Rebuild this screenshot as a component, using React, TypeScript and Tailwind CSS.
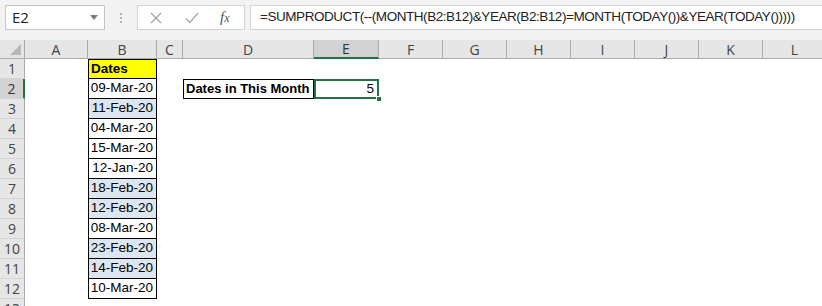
import React from "react";

const cols = ["A", "B", "C", "D", "E", "F", "G", "H", "I", "J", "K", "L"];

const dates: { text: string; blue: boolean }[] = [
  { text: "09-Mar-20", blue: false },
  { text: "11-Feb-20", blue: true },
  { text: "04-Mar-20", blue: false },
  { text: "15-Mar-20", blue: false },
  { text: "12-Jan-20", blue: false },
  { text: "18-Feb-20", blue: true },
  { text: "12-Feb-20", blue: true },
  { text: "08-Mar-20", blue: false },
  { text: "23-Feb-20", blue: true },
  { text: "14-Feb-20", blue: true },
  { text: "10-Mar-20", blue: false },
];

const uiFont = { fontFamily: '"Open Sans", "Liberation Sans", sans-serif' };
const cellFont = { fontFamily: '"Liberation Sans", Arial, sans-serif' };

const FormulaBar: React.FC = () => (
  <div className="flex h-[40px] items-start bg-[#f3f3f3] pt-[5px] pl-[5px]">
    <div className="relative flex h-[25px] w-[100px] shrink-0 items-center border border-[#c6c6c6] bg-white pl-[6px] text-[15px] text-[#222]">
      E2
      <svg className="absolute right-[6px] top-[9px]" width="8" height="5" viewBox="0 0 8 5">
        <path d="M0 0H8L4 5Z" fill="#7a7a7a" />
      </svg>
    </div>
    <div className="flex h-[25px] w-[32px] shrink-0 flex-col items-center justify-center gap-[2px]">
      <span className="h-[2px] w-[2px] bg-[#b5b5b5]" />
      <span className="h-[2px] w-[2px] bg-[#b5b5b5]" />
      <span className="h-[2px] w-[2px] bg-[#b5b5b5]" />
    </div>
    <div className="flex h-[25px] w-[108px] shrink-0 items-center border border-[#d4d4d4] bg-white">
      <svg className="ml-[12px]" width="12" height="12" viewBox="0 0 12 12">
        <path d="M1 1L11 11M11 1L1 11" stroke="#a6a6a6" strokeWidth="1.3" />
      </svg>
      <svg className="ml-[23px]" width="14" height="12" viewBox="0 0 14 12">
        <path d="M1 6.5L5 10.5L13 1" stroke="#a6a6a6" strokeWidth="1.3" fill="none" />
      </svg>
      <span
        className="ml-[21px] text-[15px] italic text-[#555]"
        style={{ fontFamily: '"Liberation Serif", serif' }}
      >
        f<span className="text-[12px]">x</span>
      </span>
    </div>
    <div
      className="ml-[5px] flex h-[25px] min-w-0 flex-1 items-center overflow-hidden border border-[#d4d4d4] border-r-0 bg-white pl-[9px] text-[13.5px] tracking-[-0.45px] text-[#222] whitespace-nowrap"
      style={cellFont}
    >
      =SUMPRODUCT(--(MONTH(B2:B12)&amp;YEAR(B2:B12)=MONTH(TODAY())&amp;YEAR(TODAY()))))
    </div>
  </div>
);

const Cell: React.FC<{ className?: string; children?: React.ReactNode }> = ({ className = "", children }) => (
  <div
    className={"flex h-[20px] items-center whitespace-nowrap text-[13.5px] text-black " + className}
    style={cellFont}
  >
    {children}
  </div>
);

export default function App() {
  const rows = Array.from({ length: 13 }, (_, i) => i + 1);
  return (
    <div className="h-[306px] w-[822px] overflow-hidden bg-white" style={uiFont}>
      <FormulaBar />
      <div className="grid grid-cols-[25px_63px_69px_26px_131px_65px_64px_64px_64px_64px_64px_64px_64px]">
        {/* header row */}
        <div className="relative h-[19px] border-r border-b border-[#ababab] bg-[#e6e6e6]">
          <svg className="absolute right-[3px] bottom-[3px]" width="11" height="11" viewBox="0 0 11 11">
            <path d="M11 0V11H0Z" fill="#b8b8b8" />
          </svg>
        </div>
        {cols.map((c) =>
          c === "E" ? (
            <div
              key={c}
              className="flex h-[19px] items-center justify-center border-r border-b-2 border-r-[#ababab] border-b-[#217346] bg-[#d2d2d2] text-[14px] text-[#333]"
            >
              {c}
            </div>
          ) : (
            <div
              key={c}
              className="flex h-[19px] items-center justify-center border-r border-b border-[#ababab] bg-[#e6e6e6] text-[14px] text-[#444]"
            >
              {c}
            </div>
          )
        )}

        {rows.map((r) => {
          const d = r >= 2 && r <= 12 ? dates[r - 2] : null;
          return (
            <React.Fragment key={r}>
              {r === 2 ? (
                <div className="flex h-[20px] items-center justify-center border-r-2 border-b border-r-[#217346] border-b-[#d4d4d4] bg-[#d2d2d2] text-[14px] text-[#333]">
                  {r}
                </div>
              ) : (
                <div className="flex h-[20px] items-center justify-center border-r border-b border-r-[#ababab] border-b-[#d4d4d4] bg-[#e6e6e6] text-[14px] text-[#444]">
                  {r}
                </div>
              )}
              <Cell />
              {r === 1 ? (
                <Cell className="border border-black bg-[#ffff00] pl-[2px] font-bold">Dates</Cell>
              ) : d ? (
                <Cell
                  className={
                    "justify-end border-x border-b border-black pr-[3px] " +
                    (d.blue ? "bg-[#dce6f1]" : "bg-white")
                  }
                >
                  {d.text}
                </Cell>
              ) : (
                <Cell />
              )}
              <Cell />
              {r === 2 ? (
                <>
                  <Cell className="border border-black pl-[2px] text-[13px] font-bold">Dates in This Month</Cell>
                  <div className="relative">
                    <Cell className="justify-end border-2 border-[#217346] pr-[3px]">5</Cell>
                    <span className="absolute right-[-3px] bottom-[-3px] h-[6px] w-[6px] border border-white bg-[#217346]" />
                  </div>
                </>
              ) : (
                <>
                  <Cell />
                  <Cell />
                </>
              )}
              {Array.from({ length: 7 }, (_, i) => (
                <Cell key={i} />
              ))}
            </React.Fragment>
          );
        })}
      </div>
    </div>
  );
}
